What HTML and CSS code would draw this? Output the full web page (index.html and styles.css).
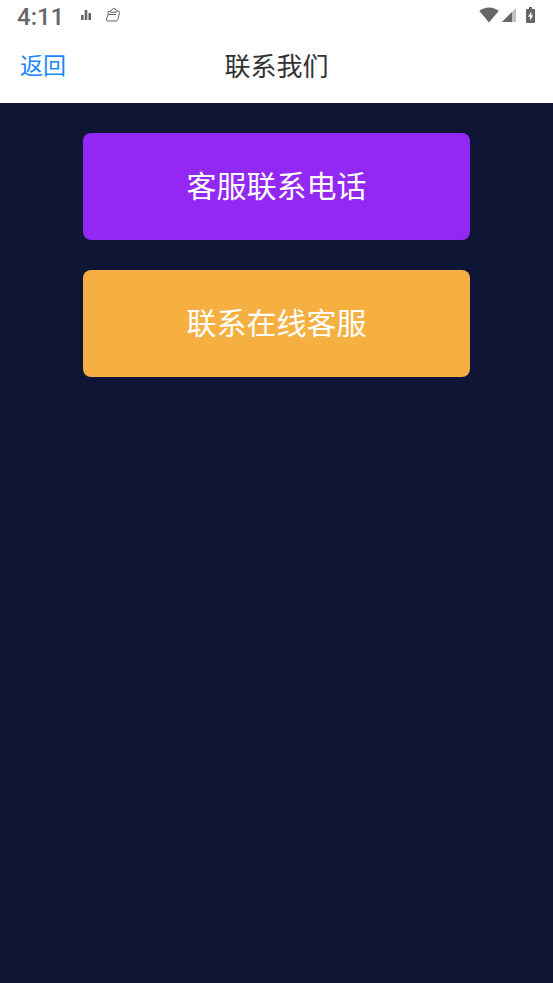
FILE: index.html
```html
<!DOCTYPE html>
<html lang="zh-CN">
<head>
    <meta charset="UTF-8">
    <meta name="viewport" content="width=device-width, initial-scale=1">
    <title>联系我们</title>
    <link rel="stylesheet" href="styles.css">
</head>
<body>
    <div class="status-bar">
        <span class="status-time">4:11</span>
        <svg class="icon-chart" width="10" height="10" viewBox="0 0 10 10">
            <path d="M0 5h2.6v5H0zM3.7 0h2.6v10H3.7zM7.4 3H10v7H7.4z"/>
        </svg>
        <svg class="icon-clip" width="16" height="16" viewBox="0 0 16 16">
            <path d="M5.5 4.5H3.2V7L1.5 12Q1.2 14 3 14H11Q12.4 14 13 12.3L14.5 5.5Q14.5 4 13.3 4H11.3M5.5 4.5Q5.5 3 7 3Q7.4 1.5 9 1.5Q10.7 1.5 10.7 3Q11.8 3.2 11.3 5.2H5.3M3.2 7.5H11"/>
        </svg>
        <div class="status-icons">
            <svg width="20" height="16" viewBox="0 0 20 16">
                <path d="M10 15.5L.3 4Q4.5.5 10 .5T19.7 4z"/>
            </svg>
            <svg width="14" height="14" viewBox="0 0 14 14">
                <path d="M0 14L14 0V14z" opacity=".4"/>
                <path d="M0 14L10 4V14z"/>
            </svg>
            <svg class="icon-battery" width="9" height="16" viewBox="0 0 9 16">
                <path d="M3 0h3v2h2q1 0 1 1v12q0 1-1 1H1q-1 0-1-1V3q0-1 1-1h2z"/>
                <path class="bolt" d="M5.3 4.5L2 9.8h2.1v3.7L7.2 8.2H5.3z"/>
            </svg>
        </div>
    </div>

    <header class="nav-bar">
        <a href="#" class="back-link">返回</a>
        <h1 class="nav-title">联系我们</h1>
    </header>

    <main class="contact-list">
        <button type="button" class="contact-button phone-button">客服联系电话</button>
        <button type="button" class="contact-button online-button">联系在线客服</button>
    </main>
</body>
</html>
```

FILE: styles.css
```css
* {
    box-sizing: border-box;
}

body {
    font-family: Roboto, "Noto Sans CJK SC", sans-serif;
    margin: 0;
    min-height: 100vh;
    background-color: #0f1535;
}

/* Phone status bar */
.status-bar {
    display: flex;
    align-items: center;
    height: 30px;
    padding: 0 18px 0 17px;
    background-color: #fff;
    color: #666;
}

.status-bar svg {
    display: block;
    fill: #666;
}

.status-time {
    font-size: 24px;
    line-height: 34px;
    font-weight: 500;
    padding-top: 4px;
}

.icon-chart {
    margin-left: 17px;
}

.status-bar .icon-clip {
    margin-left: 14px;
    fill: none;
    stroke: #666;
}

.status-icons {
    display: flex;
    align-items: center;
    gap: 3px;
    margin-left: auto;
}

.icon-battery {
    margin-left: 7px;
}

.icon-battery .bolt {
    fill: #fff;
}

/* Title bar */
.nav-bar {
    display: grid;
    grid-template-columns: 1fr auto 1fr;
    align-items: center;
    height: 73px;
    padding: 0 20px 5px;
    background-color: #fff;
}

.back-link {
    font-size: 23px;
    color: #1989fa;
    text-decoration: none;
}

.nav-title {
    margin: 0;
    font-size: 26px;
    font-weight: normal;
    color: #323233;
}

/* Contact buttons */
.contact-list {
    display: flex;
    flex-direction: column;
    align-items: center;
    gap: 30px;
    padding: 30px 0;
}

.contact-button {
    width: 70%;
    height: 107px;
    padding: 0 0 6px;
    border: none;
    border-radius: 8px;
    font-family: inherit;
    font-size: 30px;
    color: #fff;
    cursor: pointer;
}

.phone-button {
    background-color: #9328f5;
}

.online-button {
    background-color: #f5b041;
}
```
